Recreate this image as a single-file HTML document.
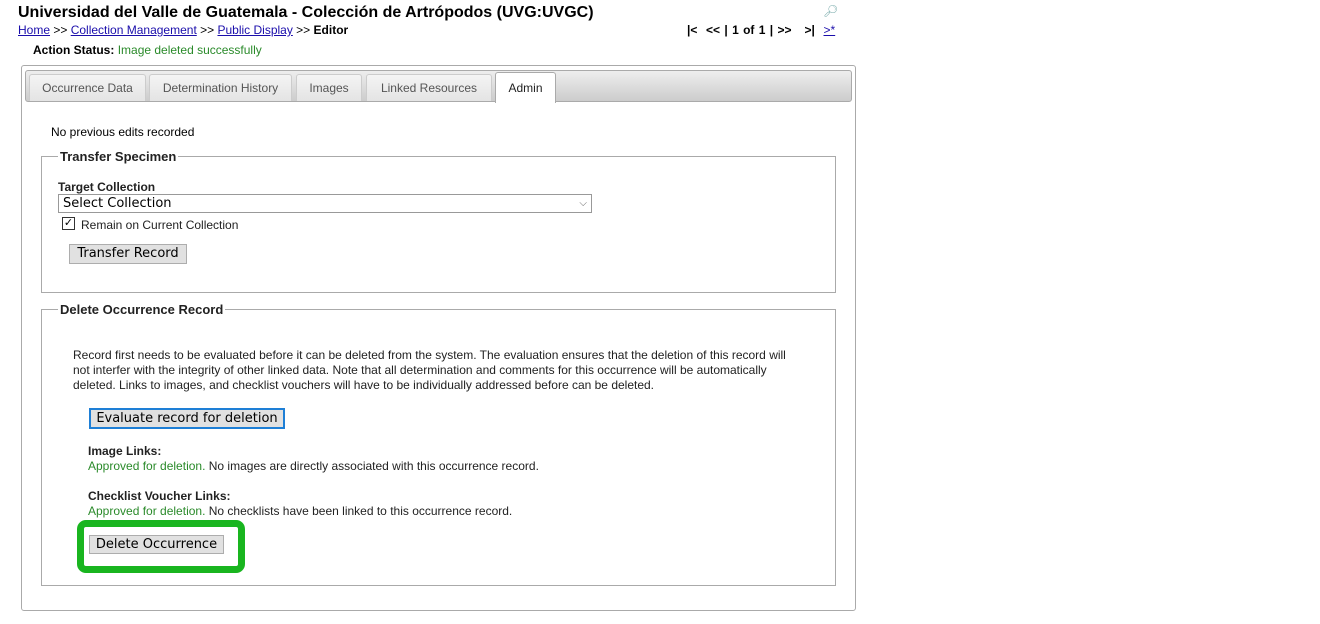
<!DOCTYPE html>
<html><head><meta charset="utf-8"><style>
body{margin:0;width:1320px;height:624px;background:#fff;font-family:"Liberation Sans",Arial,sans-serif;color:#000;position:relative;overflow:hidden}
.a{position:absolute;white-space:nowrap}
a{color:#1a0dab;text-decoration:underline}
.s12{font-size:12px}
.tab{position:absolute;top:74px;height:27px;box-sizing:border-box;border:1px solid #ccc;border-bottom:none;background:linear-gradient(#f4f4f4,#e4e4e4);border-radius:3px 3px 0 0;font-size:12px;color:#555;text-align:center;line-height:27px}
.btn{position:absolute;box-sizing:border-box;background:#e1e1e1;border:1px solid #adadad;font-size:13px;font-family:"DejaVu Sans","Liberation Sans",sans-serif;text-align:center;color:#000}
fieldset{position:absolute;margin:0;padding:0;border:1px solid #aaa;box-sizing:border-box}
legend{font-weight:bold;font-size:13px;padding:0 2px;margin-left:16px;color:#222}
.g{color:#2a8a2a}
</style></head><body>
<div class="a" style="left:18px;top:4px;font-size:16px;font-weight:bold">Universidad del Valle de Guatemala - Colección de Artrópodos (UVG:UVGC)</div>
<div class="a s12" style="left:18px;top:23px"><a href="#">Home</a> &gt;&gt; <a href="#">Collection Management</a> &gt;&gt; <a href="#">Public Display</a> &gt;&gt; <b>Editor</b></div>
<div class="a" style="left:823px;top:4px;font-size:12px;color:#7aa">&#x1F50E;&#xFE0E;</div>
<div class="a s12" style="left:687px;top:23px;font-weight:bold;word-spacing:1px">|&lt; &nbsp;&lt;&lt; | 1 of 1 | &gt;&gt; &nbsp; &gt;| &nbsp;<a href="#" style="font-weight:normal">&gt;*</a></div>
<div class="a s12" style="left:33px;top:43px"><b>Action Status:</b> <span class="g">Image deleted successfully</span></div>

<div class="a" style="left:21px;top:65px;width:835px;height:546px;box-sizing:border-box;border:1px solid #aaa;border-radius:3px"></div>
<div class="a" style="left:25px;top:70px;width:827px;height:32px;box-sizing:border-box;border:1px solid #aaa;border-radius:3px;background:linear-gradient(#eee,#ccc)"></div>
<div class="tab" style="left:29px;width:117px">Occurrence Data</div>
<div class="tab" style="left:149px;width:143px">Determination History</div>
<div class="tab" style="left:296px;width:66px">Images</div>
<div class="tab" style="left:366px;width:126px">Linked Resources</div>
<div class="tab" style="left:495px;width:61px;top:72px;height:31px;background:#fff;border-color:#aaa;color:#222;line-height:31px">Admin</div>

<div class="a s12" style="left:51px;top:125px">No previous edits recorded</div>

<fieldset style="left:41px;top:149px;width:795px;height:144px"><legend>Transfer Specimen</legend></fieldset>
<div class="a s12" style="left:58px;top:180px;font-weight:bold;color:#222">Target Collection</div>
<div class="a" style="left:58px;top:194px;width:534px;height:19px;box-sizing:border-box;border:1px solid #999;font-size:13px;font-family:'DejaVu Sans',sans-serif;padding-left:4px;line-height:17px">Select Collection<span style="position:absolute;right:4px;top:0;font-size:10px;color:#666">&#x2335;</span></div>
<div class="a" style="left:62px;top:217px;width:13px;height:13px;box-sizing:border-box;border:1px solid #333;font-size:11px;line-height:11px;text-align:center">✓</div>
<div class="a s12" style="left:81px;top:218px;color:#222">Remain on Current Collection</div>
<div class="btn" style="left:69px;top:244px;width:118px;height:20px;line-height:18px">Transfer Record</div>

<fieldset style="left:41px;top:302px;width:795px;height:284px"><legend>Delete Occurrence Record</legend></fieldset>
<div class="a s12" style="left:73px;top:348px;line-height:15px;color:#222;white-space:normal;width:732px">Record first needs to be evaluated before it can be deleted from the system. The evaluation ensures that the deletion of this record will not interfer with the integrity of other linked data. Note that all determination and comments for this occurrence will be automatically deleted. Links to images, and checklist vouchers will have to be individually addressed before can be deleted.</div>
<div class="btn" style="left:89px;top:408px;width:196px;height:21px;line-height:17px;border:2px solid #1e7fd6">Evaluate record for deletion</div>
<div class="a s12" style="left:88px;top:444px;font-weight:bold;color:#222">Image Links:</div>
<div class="a s12" style="left:88px;top:459px;color:#222"><span class="g">Approved for deletion.</span> No images are directly associated with this occurrence record.</div>
<div class="a s12" style="left:88px;top:489px;font-weight:bold;color:#222">Checklist Voucher Links:</div>
<div class="a s12" style="left:88px;top:504px;color:#222"><span class="g">Approved for deletion.</span> No checklists have been linked to this occurrence record.</div>
<div class="a" style="left:77px;top:520px;width:168px;height:53px;box-sizing:border-box;border:7px solid #19b51f;border-radius:9px"></div>
<div class="btn" style="left:89px;top:535px;width:135px;height:19px;line-height:17px">Delete Occurrence</div>
</body></html>
